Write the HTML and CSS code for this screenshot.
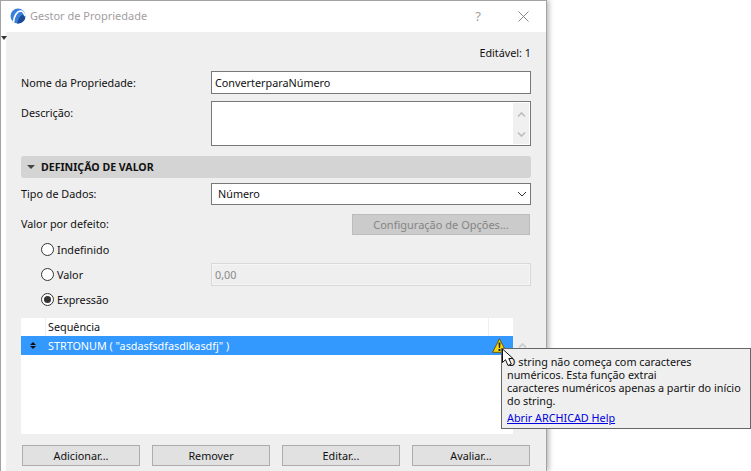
FILE: index.html
```html
<!DOCTYPE html>
<html lang="pt">
<head>
<meta charset="utf-8">
<title>Gestor de Propriedade</title>
<link rel="stylesheet" href="styles.css">
</head>
<body>
<div class="window">
  <header class="titlebar">
    <svg class="logo" width="16" height="16" viewBox="0 0 16 16"><circle cx="8" cy="8" r="7.500" fill="#3a7fd8"/><path d="M7 15.400C9 9 11 6.500 13 7c1 .5 1.800 1.500 2.300 2.800C14.600 13 11.500 15.500 8 15.500z" fill="#1c4a96"/><path d="M3.500 14C4 8 7 3.200 10.500 3c2.500 0 3.800 2.500 4.500 5" stroke="#fff" stroke-width="1.700" fill="none"/></svg>
    <span class="title">Gestor de Propriedade</span>
    <span class="help">?</span>
    <svg class="close" width="11" height="11" viewBox="0 0 11 11"><path d="M.5.500l10 10M10.500.500l-10 10" stroke="#8a8a8a" fill="none"/></svg>
  </header>
  <div class="body">
    <span class="marker"></span>
    <main class="content">
      <div class="editable">Editável: 1</div>
      <div class="row name-row"><label class="lbl">Nome da Propriedade:</label><div class="field name-field">ConverterparaNúmero</div></div>
      <div class="row desc-row"><label class="lbl">Descrição:</label>
        <div class="field desc-field">
          <div class="vscroll">
            <svg width="9" height="7" viewBox="0 0 9 7"><path d="M1 5.500l3.500-3.500 3.500 3.500" stroke="#bdbdbd" stroke-width="1.600" fill="none"/></svg>
            <svg width="9" height="7" viewBox="0 0 9 7"><path d="M1 1.500l3.500 3.500 3.500-3.500" stroke="#bdbdbd" stroke-width="1.600" fill="none"/></svg>
          </div>
        </div>
      </div>
      <div class="section"><span class="tri"></span>DEFINIÇÃO DE VALOR</div>
      <div class="row type-row"><label class="lbl">Tipo de Dados:</label>
        <div class="field select-field"><span class="select-text">Número</span>
          <svg width="10" height="6" viewBox="0 0 10 6"><path d="M1 1l4 4 4-4" stroke="#333" fill="none"/></svg>
        </div>
      </div>
      <div class="row default-row"><label class="lbl">Valor por defeito:</label><div class="cfg-btn">Configuração de Opções...</div></div>
      <div class="radios">
        <div class="radio-row r1"><span class="radio"></span>Indefinido</div>
        <div class="radio-row r2"><span class="radio"></span>Valor<div class="field value-field">0,00</div></div>
        <div class="radio-row r3"><span class="radio on"></span>Expressão</div>
      </div>
      <div class="table-wrap">
        <div class="table">
          <div class="thead"><span class="c1"></span><span class="c2">Sequência</span><span class="c3"></span></div>
          <div class="trow"><span class="c1 updown"><i class="up"></i><i class="down"></i></span><span class="c2">STRTONUM ( "asdasfsdfasdlkasdfj" )</span>
            <svg class="warn" width="15" height="15" viewBox="0 0 15 15"><path d="M7.500.8L14.400 14.300H.6z" fill="#f5d90a" stroke="#6b5a00" stroke-width="1" stroke-linejoin="round"/><path d="M6.500 4.500h2l-.4 5.500H6.900zM6.500 11h2v2h-2z" fill="#222"/></svg>
          </div>
        </div>
        <svg class="tscroll" width="9" height="7" viewBox="0 0 9 7"><path d="M1 5.500l3.500-3.500 3.500 3.500" stroke="#cfcfcf" stroke-width="1.800" fill="none"/></svg>
      </div>
      <div class="buttons">
        <div class="btn">Adicionar...</div>
        <div class="btn">Remover</div>
        <div class="btn">Editar...</div>
        <div class="btn">Avaliar...</div>
      </div>
    </main>
  </div>
</div>
<div class="tooltip">
  <p>O string não começa com caracteres<br>numéricos. Esta função extrai<br>caracteres numéricos apenas a partir do início<br>do string.</p>
  <a href="#">Abrir ARCHICAD Help</a>
</div>
<svg class="cursor" width="16" height="20" viewBox="0 0 16 20"><path d="M1.500 1v13.500l3-2.800 2.500 5.800 3.300-1.400-2.500-5.600h4.200z" fill="#fff" stroke="#111" stroke-width="1" stroke-linejoin="round"/></svg>
</body>
</html>
```
FILE: styles.css
```css
* { box-sizing: border-box; }
html, body { margin: 0; padding: 0; background: #fff; }
body { width: 751px; height: 471px; overflow: hidden; position: relative; font: 10.800px/13px "Noto Sans", sans-serif; color: #111; }
.window { width: 547px; height: 471px; border: 1px solid #a3a3a3; border-bottom: 0; box-shadow: 2px 0 5px rgba(0,0,0,.28); background: #fff; display: flex; flex-direction: column; }
.titlebar { height: 31px; flex: none; display: flex; align-items: center; padding: 0 17px 1px 9px; background: #fff; }
.logo { margin-right: 4px; }
.title { font-size: 11px; color: #a39ea0; flex: 1; padding-bottom: 2px; }
.help { font-size: 13px; color: #a0a0a0; margin-right: 37px; }
.body { flex: 1; position: relative; padding-left: 5px; }
.marker { position: absolute; left: 0; top: 4px; border: 3.500px solid transparent; border-top: 4px solid #333; border-bottom: 0; }
.content { height: 100%; background: #efefef; padding: 0 15px 0 15px; display: flex; flex-direction: column; }
.editable { text-align: right; height: 39px; padding-top: 14px; }
.row { display: flex; }
.lbl { width: 190px; flex: none; }
.field { width: 320px; background: #fff; border: 1px solid #787878; padding-left: 3px; position: relative; }
.name-row { height: 23px; align-items: center; }
.name-field { height: 23px; line-height: 21px; }
.desc-row { margin-top: 7px; height: 45px; }
.desc-row .lbl { padding-top: 5px; }
.desc-field { height: 45px; }
.vscroll { position: absolute; right: 1px; top: 1px; bottom: 1px; width: 16px; background: #f0f0f0; display: flex; flex-direction: column; justify-content: space-between; align-items: center; padding: 8px 0 6px; }
.vscroll svg { display: block; }
.section { margin-top: 10px; height: 22px; width: 510px; border-radius: 3px; background: #d4d4d4; font-weight: 700; display: flex; align-items: center; font-size: 10.600px; }
.tri { width: 0; height: 0; border: 4px solid transparent; border-top: 4px solid #444; border-bottom: 0; margin: 0 6px 0 6px; }
.type-row { margin-top: 5px; height: 22px; align-items: center; }
.type-row .lbl { padding-bottom: 2px; }
.select-field { height: 22px; padding-left: 6px; display: flex; justify-content: space-between; align-items: center; padding-right: 3px; }
.select-text { padding-bottom: 2px; }
.default-row { margin-top: 9px; height: 21px; align-items: center; }
.default-row .lbl { width: 331px; padding-bottom: 2px; }
.cfg-btn { width: 178px; height: 21px; background: #cbcbcb; border: 1px solid #bcbcbc; color: #858585; text-align: center; line-height: 19px; font-size: 11px; }
.radios { display: flex; flex-direction: column; padding-left: 20px; width: 510px; }
.radio-row { display: flex; align-items: center; height: 25px; }
.r1 { margin-top: 2px; }
.radio { width: 13px; height: 13px; border-radius: 50%; border: 1px solid #333; background: #fff; margin-right: 3px; display: flex; align-items: center; justify-content: center; flex: none; }
.radio.on::after { content: ""; width: 7px; height: 7px; border-radius: 50%; background: #333; }
.value-field { margin-left: auto; margin-top: 1px; align-self: flex-start; height: 23px; line-height: 21px; background: #efefef; border: 1px solid #d8d8d8; box-shadow: inset 0 0 0 1px #f5f5f5; color: #8a8a8a; }
.table-wrap { margin-top: 6px; display: flex; position: relative; }
.table { width: 492px; height: 116px; background: #fff; }
.thead { height: 18px; display: flex; line-height: 18px; }
.c1 { width: 25px; flex: none; border-right: 1px solid #efefef; }
.c2 { flex: 1; padding-left: 2px; }
.c3 { width: 25px; flex: none; border-left: 1px solid #efefef; }
.trow { height: 19px; background: #3399ff; color: #fff; display: flex; align-items: center; position: relative; line-height: 19px; }
.trow .c1 { border: 0; }
.updown { display: flex; flex-direction: column; align-items: center; gap: 1px; padding-right: 2px; }
.updown i { display: block; width: 0; height: 0; border-left: 3.500px solid transparent; border-right: 3.500px solid transparent; }
.up { border-bottom: 3.500px solid #111; }
.down { border-top: 3.500px solid #111; }
.warn { position: absolute; left: 471px; top: 2px; }
.tscroll { position: absolute; left: 497px; top: 24px; }
.buttons { margin-top: 11px; padding-left: 1px; display: flex; gap: 12px; }
.btn { width: 118px; height: 21px; background: #e1e1e1; border: 1px solid #adadad; text-align: center; line-height: 19px; }
.tooltip { position: absolute; left: 501px; top: 348px; width: 250px; height: 81px; background: #efefef; border: 1px solid #666; padding: 6px 5px 0; white-space: nowrap; }
.tooltip p { margin: 0; line-height: 13px; }
.tooltip a { display: block; margin-top: 4px; color: #0000e0; text-decoration: underline; }
.cursor { position: absolute; left: 501px; top: 348px; }
```
